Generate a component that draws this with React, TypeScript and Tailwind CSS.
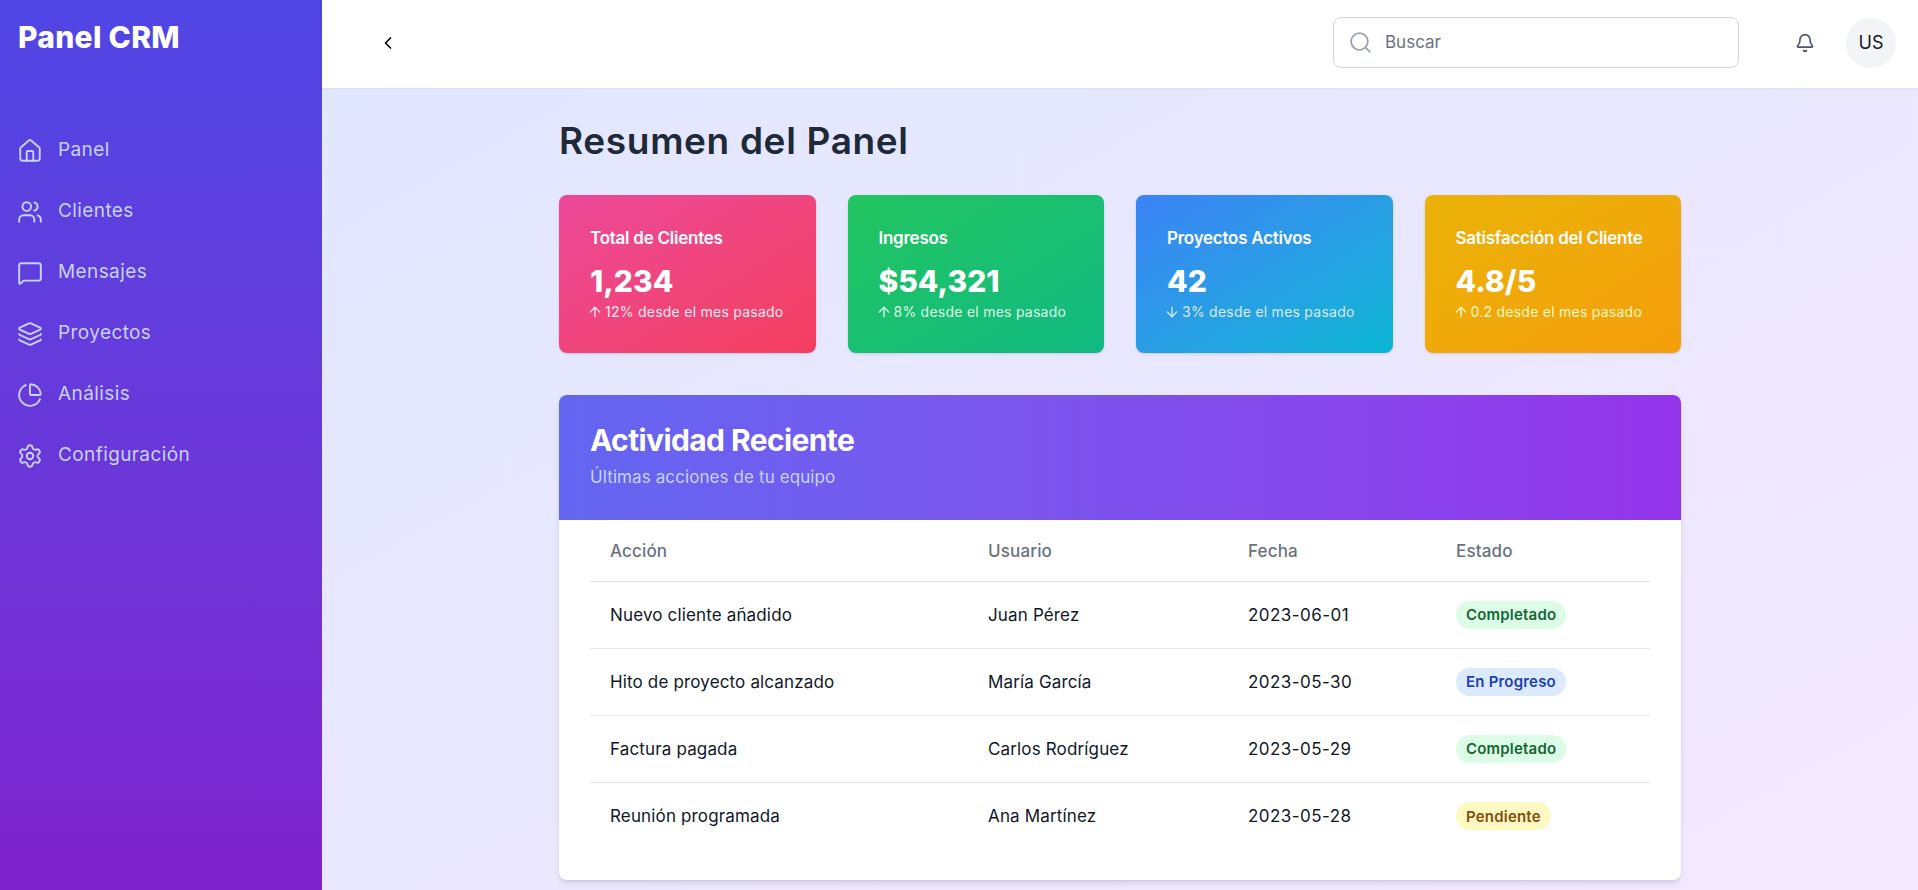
import { ArrowDown, ArrowUp, Bell, ChevronLeft, House, Layers, MessageSquare, PieChart, Search, Settings, Users } from "lucide-react";

const navItems = [
  { label: "Panel", icon: House },
  { label: "Clientes", icon: Users },
  { label: "Mensajes", icon: MessageSquare },
  { label: "Proyectos", icon: Layers },
  { label: "Análisis", icon: PieChart },
  { label: "Configuración", icon: Settings },
];

const stats = [
  { title: "Total de Clientes", value: "1,234", note: "12% desde el mes pasado", up: true, bg: "from-[#ec4899] to-[#f43f5e]", sub: "text-pink-100" },
  { title: "Ingresos", value: "$54,321", note: "8% desde el mes pasado", up: true, bg: "from-[#22c55e] to-[#10b981]", sub: "text-green-100" },
  { title: "Proyectos Activos", value: "42", note: "3% desde el mes pasado", up: false, bg: "from-[#3b82f6] to-[#06b6d4]", sub: "text-blue-100" },
  { title: "Satisfacción del Cliente", value: "4.8/5", note: "0.2 desde el mes pasado", up: true, bg: "from-[#eab308] to-[#f59e0b]", sub: "text-yellow-100" },
];

const statusStyles: Record<string, string> = {
  Completado: "bg-[#dcfce7] text-[#166534]",
  "En Progreso": "bg-[#dbeafe] text-[#1e40af]",
  Pendiente: "bg-[#fef9c3] text-[#854d0e]",
};

const rows = [
  { action: "Nuevo cliente añadido", user: "Juan Pérez", date: "2023-06-01", status: "Completado" },
  { action: "Hito de proyecto alcanzado", user: "María García", date: "2023-05-30", status: "En Progreso" },
  { action: "Factura pagada", user: "Carlos Rodríguez", date: "2023-05-29", status: "Completado" },
  { action: "Reunión programada", user: "Ana Martínez", date: "2023-05-28", status: "Pendiente" },
];

export default function App() {
  return (
    <div className="flex h-screen overflow-hidden font-['Inter',sans-serif]">
      <aside className="w-[322px] shrink-0 bg-linear-to-b from-[#4f46e5] to-[#7e22ce]">
        <h1 className="mt-[19px] pl-[18px] text-[30px] leading-9 font-extrabold tracking-[0.3px] text-white">Panel CRM</h1>
        <nav className="mt-[65px] flex flex-col pl-[17px]">
          {navItems.map((item) => (
            <a key={item.label} href="#" className="flex h-[61px] items-center gap-[15px] text-[19px] tracking-[0.4px] text-[#c7d2fe]">
              <item.icon className="h-[26px] w-[26px]" strokeWidth={1.75} />
              {item.label}
            </a>
          ))}
        </nav>
      </aside>

      <div className="flex min-w-0 flex-1 flex-col bg-linear-to-br from-[#e0e7ff] to-[#f3e8ff]">
        <header className="z-10 flex h-[88px] shrink-0 items-center bg-white pr-[22px] pb-[3px] pl-[56px] shadow-xs">
          <button type="button" className="text-black" aria-label="Volver">
            <ChevronLeft className="h-5 w-5" />
          </button>
          <div className="ml-auto flex h-[51px] w-[406px] items-center gap-[12px] rounded-lg border border-gray-300 px-[14px] text-gray-500">
            <Search className="h-[25px] w-[25px] text-gray-400" strokeWidth={1.75} />
            <span className="text-[17px]">Buscar</span>
          </div>
          <Bell className="ml-[56px] h-5 w-5 text-gray-600" />
          <div className="ml-[31px] flex h-[50px] w-[50px] items-center justify-center rounded-full bg-gray-100 text-lg text-gray-900">US</div>
        </header>

        <main className="mx-auto w-[1122px]">
          <h2 className="mt-[33px] text-[37px] leading-10 font-semibold tracking-[0.65px] text-[#1f2937]">Resumen del Panel</h2>

          <div className="mt-[34px] grid grid-cols-4 gap-8">
            {stats.map((stat) => (
              <div key={stat.title} className={`h-[158px] rounded-lg bg-linear-to-br px-[31px] pt-[31px] shadow-sm ${stat.bg}`}>
                <p className="text-[17px] leading-6 font-semibold tracking-[-0.25px] text-white">{stat.title}</p>
                <p className="mt-[13px] text-3xl leading-9 font-extrabold text-white">{stat.value}</p>
                <p className={`mt-[3px] -ml-[3px] flex items-center gap-[2px] text-sm leading-5 tracking-[0.25px] ${stat.sub}`}>
                  {stat.up ? <ArrowUp className="h-4 w-4" /> : <ArrowDown className="h-4 w-4" />}
                  {stat.note}
                </p>
              </div>
            ))}
          </div>

          <section className="mt-[42px] overflow-hidden rounded-lg bg-white shadow-md">
            <div className="h-[125px] bg-linear-to-r from-[#6366f1] to-[#9333ea] px-[31px] pt-[27px]">
              <h3 className="text-3xl leading-9 font-bold tracking-[-0.6px] text-white">Actividad Reciente</h3>
              <p className="mt-[7px] text-[17px] leading-6 tracking-[0.1px] text-[#c7d2fe]">Últimas acciones de tu equipo</p>
            </div>
            <div className="px-[31px] pb-[31px]">
              <table className="w-full table-fixed text-left text-[17px] tracking-[0.15px]">
                <thead>
                  <tr className="h-[61px] border-b border-gray-200 text-gray-500">
                    <th className="w-[398px] pt-[2px] pl-[20px] font-medium">Acción</th>
                    <th className="w-[260px] pt-[2px] font-medium">Usuario</th>
                    <th className="w-[208px] pt-[2px] font-medium">Fecha</th>
                    <th className="pt-[2px] font-medium">Estado</th>
                  </tr>
                </thead>
                <tbody>
                  {rows.map((row) => (
                    <tr key={row.action} className="h-[67px] border-b border-gray-200 text-gray-900 last:border-b-0">
                      <td className="pt-[2px] pl-[20px]">{row.action}</td>
                      <td className="pt-[2px]">{row.user}</td>
                      <td className="pt-[2px] tracking-[0.45px]">{row.date}</td>
                      <td>
                        <span className={`inline-flex h-7 items-center rounded-full px-2.5 pt-[2px] text-[15px] font-semibold tracking-[0.2px] ${statusStyles[row.status]}`}>
                          {row.status}
                        </span>
                      </td>
                    </tr>
                  ))}
                </tbody>
              </table>
            </div>
          </section>
        </main>
      </div>
    </div>
  );
}
